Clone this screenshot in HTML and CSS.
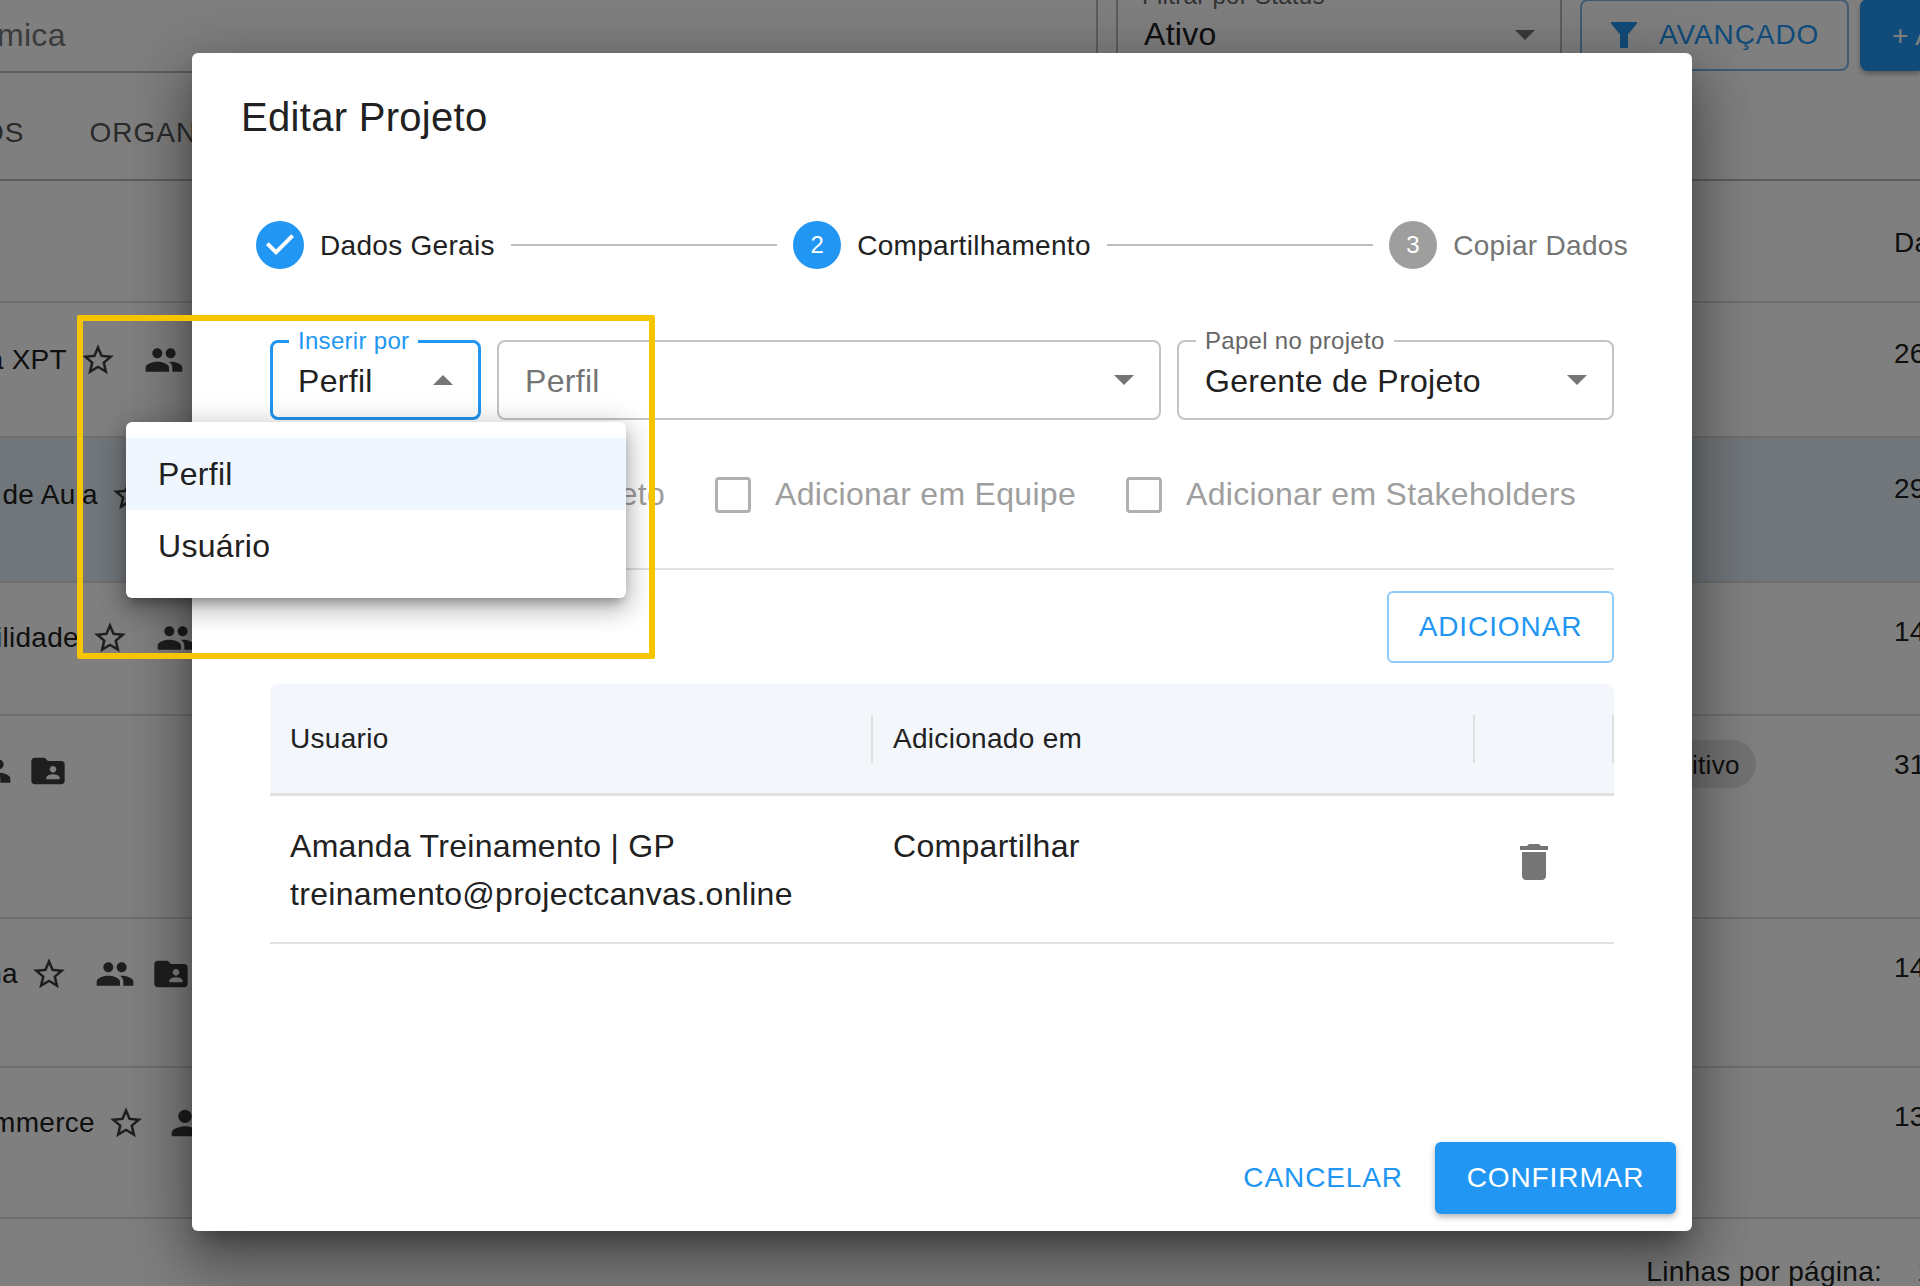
FILE: index.html
```html
<!DOCTYPE html>
<html lang="pt-BR">
<head>
    <meta charset="UTF-8">
    <meta name="viewport" content="width=device-width, initial-scale=1.0">
    <title>Editar Projeto</title>
    <link rel="stylesheet" href="styles.css">
</head>
<body>
    <svg class="sprites" width="0" height="0">
        <symbol id="i-star" viewBox="0 0 24 24"><path d="M22 9.24l-7.19-.62L12 2 9.19 8.63 2 9.24l5.46 4.73L5.82 21 12 17.27 18.18 21l-1.63-7.03L22 9.24zM12 15.4l-3.76 2.27 1-4.28-3.32-2.88 4.38-.38L12 6.1l1.71 4.04 4.38.38-3.32 2.88 1 4.28L12 15.4z"/></symbol>
        <symbol id="i-group" viewBox="0 0 24 24"><path d="M16 11c1.66 0 2.99-1.34 2.99-3S17.66 5 16 5c-1.66 0-3 1.34-3 3s1.34 3 3 3zm-8 0c1.66 0 2.99-1.34 2.99-3S9.66 5 8 5C6.34 5 5 6.34 5 8s1.34 3 3 3zm0 2c-2.33 0-7 1.17-7 3.5V19h14v-2.5c0-2.33-4.67-3.5-7-3.5zm8 0c-.29 0-.62.02-.97.05 1.16.84 1.97 1.97 1.97 3.45V19h6v-2.5c0-2.33-4.67-3.5-7-3.5z"/></symbol>
        <symbol id="i-person" viewBox="0 0 24 24"><path d="M12 12c2.21 0 4-1.79 4-4s-1.79-4-4-4-4 1.79-4 4 1.79 4 4 4zm0 2c-2.67 0-8 1.34-8 4v2h16v-2c0-2.66-5.33-4-8-4z"/></symbol>
        <symbol id="i-folder" viewBox="0 0 24 24"><path d="M20 6h-8l-2-2H4c-1.1 0-1.99.9-1.99 2L2 18c0 1.1.9 2 2 2h16c1.1 0 2-.9 2-2V8c0-1.1-.9-2-2-2zm-5 3c1.1 0 2 .9 2 2s-.9 2-2 2-2-.9-2-2 .9-2 2-2zm4 8h-8v-1c0-1.33 2.67-2 4-2s4 .67 4 2v1z"/></symbol>
    </svg>

    <!-- pagina por tras do dialogo -->
    <div class="page">
        <div class="topbar">
            <div class="search">mica</div>
            <div class="status-select">
                <span class="status-label">Filtrar por Status</span>
                <span>Ativo</span>
                <span class="arrow"></span>
            </div>
            <div class="btn-advanced">
                <svg class="filter-icon" viewBox="0 0 26 26"><path d="M1 0h24c.9 0 1.300 1 .8 1.700L17 12.500V25c0 .6-.4 1-1 1h-6c-.6 0-1-.4-1-1V12.500L.2 1.700C-.3 1 .1 0 1 0z"/></svg>
                AVANÇADO
            </div>
            <div class="btn-new">+ A</div>
        </div>
        <div class="tabs"><span class="tab-os">OS</span><span class="tab-org">ORGANIZAÇÕES</span></div>
        <div class="thead"><span class="col-sep"></span><span class="num">Da</span></div>

        <div class="row row-1">
            <span class="name">a XPT</span>
            <svg class="star"><use href="#i-star"/></svg>
            <svg class="ico ico-first"><use href="#i-group"/></svg>
            <span class="num">26</span>
        </div>
        <div class="row row-2 row-selected">
            <span class="name">de Aula</span>
            <svg class="star"><use href="#i-star"/></svg>
            <span class="num">29</span>
        </div>
        <div class="row row-3">
            <span class="name">ilidade</span>
            <svg class="star"><use href="#i-star"/></svg>
            <svg class="ico ico-first"><use href="#i-group"/></svg>
            <span class="num">14</span>
        </div>
        <div class="row row-4">
            <svg class="ico"><use href="#i-group"/></svg>
            <svg class="ico ico-next"><use href="#i-folder"/></svg>
            <span class="chip">itivo</span>
            <span class="num">31</span>
        </div>
        <div class="row row-5">
            <span class="name">na</span>
            <svg class="star"><use href="#i-star"/></svg>
            <svg class="ico ico-first"><use href="#i-group"/></svg>
            <svg class="ico ico-next"><use href="#i-folder"/></svg>
            <span class="num">14</span>
        </div>
        <div class="row row-6">
            <span class="name">mmerce</span>
            <svg class="star"><use href="#i-star"/></svg>
            <svg class="ico ico-person"><use href="#i-person"/></svg>
            <span class="num">13</span>
        </div>
        <div class="pager"><span>Linhas por página:</span><span>1</span></div>
    </div>
    <div class="scrim"></div>

    <div class="modal">
        <h2 class="modal-title">Editar Projeto</h2>

        <div class="stepper">
            <svg class="step-icon" viewBox="0 0 24 24"><path d="M12 0a12 12 0 1 0 0 24 12 12 0 0 0 0-24zm-2 17l-5-5 1.400-1.400 3.600 3.600 7.600-7.600L19 8l-9 9z"/></svg>
            <span class="step-text">Dados Gerais</span>
            <span class="step-line"></span>
            <span class="step-num">2</span>
            <span class="step-text">Compartilhamento</span>
            <span class="step-line"></span>
            <span class="step-num step-off">3</span>
            <span class="step-text step-text-off">Copiar Dados</span>
        </div>

        <div class="form">
            <div class="fields">
                <div class="field field-by field-focus">
                    <span class="field-label">Inserir por</span>
                    <span class="field-value">Perfil</span>
                    <span class="arrow arrow-up"></span>
                </div>
                <div class="field field-profile">
                    <span class="field-value placeholder">Perfil</span>
                    <span class="arrow"></span>
                </div>
                <div class="field field-role">
                    <span class="field-label field-label-off">Papel no projeto</span>
                    <span class="field-value">Gerente de Projeto</span>
                    <span class="arrow"></span>
                </div>
            </div>

            <div class="checks">
                <label class="check check-first"><span class="box"></span>Adicionar em Projeto</label>
                <label class="check"><span class="box"></span>Adicionar em Equipe</label>
                <label class="check"><span class="box"></span>Adicionar em Stakeholders</label>
            </div>

            <div class="add-row">
                <button class="btn-add">ADICIONAR</button>
            </div>

            <div class="table">
                <div class="table-head">
                    <div class="cell cell-user">Usuario</div>
                    <div class="cell cell-date">Adicionado em</div>
                    <div class="cell cell-act"></div>
                </div>
                <div class="table-row">
                    <div class="cell cell-user">Amanda Treinamento | GP<br>treinamento@projectcanvas.online</div>
                    <div class="cell cell-date">Compartilhar</div>
                    <div class="cell cell-act">
                        <svg class="trash" viewBox="0 0 24 24"><path d="M6 19c0 1.100.9 2 2 2h8c1.100 0 2-.9 2-2V7H6v12zM19 4h-3.500l-1-1h-5l-1 1H5v2h14V4z"/></svg>
                    </div>
                </div>
            </div>
        </div>

        <div class="modal-footer">
            <button class="btn-cancel">CANCELAR</button>
            <button class="btn-confirm">CONFIRMAR</button>
        </div>
    </div>

    <div class="menu">
        <div class="menu-item menu-item-on">Perfil</div>
        <div class="menu-item">Usuário</div>
    </div>

    <div class="highlight"></div>
</body>
</html>
```

FILE: styles.css
```css
* {
    box-sizing: border-box;
}
html, body {
    margin: 0;
    height: 1286px;
    overflow: hidden;
}
body {
    position: relative;
    width: 1920px;
    font-family: "Liberation Sans", Arial, sans-serif;
    font-size: 32px;
    letter-spacing: 0.3px;
    color: #212121;
    background: #fff;
}
.sprites {
    position: absolute;
}

/* pagina de fundo */
.page {
    height: 1286px;
    overflow: hidden;
}
.topbar {
    display: flex;
    align-items: flex-end;
    height: 73px;
}
.search {
    width: 1101px;
    height: 90px;
    flex: none;
    padding: 39px 0 0 0;
    margin-left: -3px;
    line-height: 26px;
    font-size: 32px;
    color: #777;
    border-right: 2px solid #bbb;
    border-bottom: 2px solid #bbb;
}
.status-select {
    position: relative;
    display: flex;
    justify-content: space-between;
    align-items: center;
    flex: none;
    width: 446px;
    height: 100px;
    margin: 0 18px 0 18px;
    padding: 21px 0 0 26px;
    border: 2px solid #bbb;
    border-bottom: none;
    align-self: flex-end;
}
.status-label {
    position: absolute;
    left: 24px;
    top: 7px;
    font-size: 24px;
    color: #666;
}
.status-select .arrow {
    margin-right: 25px;
}
.btn-advanced {
    display: flex;
    align-items: center;
    flex: none;
    width: 269px;
    height: 72px;
    margin-bottom: 2px;
    padding: 0 0 0 29px;
    gap: 22px;
    font-size: 28px;
    letter-spacing: 0.9px;
    white-space: nowrap;
    color: #2196f3;
    border: 2px solid #7fb7ea;
    border-radius: 8px;
}
.filter-icon {
    width: 26px;
    height: 26px;
    fill: #2196f3;
}
.btn-new {
    flex: none;
    width: 60px;
    height: 72px;
    margin: 0 0 2px 11px;
    padding: 21px 0 0 32px;
    font-size: 28px;
    white-space: nowrap;
    overflow: hidden;
    color: #fff;
    background: #2196f3;
    border-radius: 8px 0 0 8px;
    box-shadow: 0 3px 5px rgba(0, 0, 0, 0.3);
}
.tabs {
    height: 108px;
    padding-top: 42px;
    line-height: 36px;
    font-size: 28px;
    letter-spacing: 1px;
    color: #555;
    border-bottom: 2px solid #bbb;
}
.tab-os {
    margin-left: -18px;
}
.tab-org {
    margin-left: 65px;
}
.thead {
    display: flex;
    height: 122px;
    padding-top: 44px;
    border-bottom: 2px solid #ddd;
    align-items: flex-start;
}
.col-sep {
    width: 2px;
    height: 46px;
    margin-left: 1874px;
    background: #ddd;
}
.thead .num {
    margin: 2px 0 0 20px;
    font-size: 28px;
}
.row {
    position: relative;
    display: flex;
    align-items: flex-start;
    padding-top: 35px;
    font-size: 28px;
    line-height: 36px;
    border-bottom: 2px solid #ddd;
}
.row .num {
    position: absolute;
    left: 1894px;
    top: 31px;
    font-size: 28px;
}
.row-selected {
    background: #e2edf5;
}
.row-1 { height: 135px; padding-top: 37px; }
.row-2 { height: 145px; padding-top: 37px; }
.row-3 { height: 133px; }
.row-4 { height: 203px; }
.row-5 { height: 149px; }
.row-6 { height: 151px; }
.row-1 .num,
.row-2 .num {
    top: 33px;
}
.name {
    display: flex;
    justify-content: flex-end;
    flex: none;
    height: 40px;
    align-items: center;
    white-space: nowrap;
}
.row-1 .name { width: 67px; }
.row-2 .name { width: 98px; }
.row-3 .name { width: 79px; }
.row-5 .name { width: 18px; }
.row-6 .name { width: 95px; }
.star {
    flex: none;
    width: 38px;
    height: 38px;
    margin: 1px 0 0 12px;
    fill: #3d3d3d;
}
.ico {
    flex: none;
    width: 40px;
    height: 40px;
    fill: #3d3d3d;
}
.ico-first {
    margin-left: 27px;
}
.ico-next {
    margin-left: 16px;
}
.ico-person {
    margin-left: 20px;
}
.row-4 .ico:first-child {
    margin-left: -28px;
}
.chip {
    position: absolute;
    left: 1600px;
    top: 24px;
    width: 156px;
    height: 48px;
    padding-left: 92px;
    line-height: 50px;
    font-size: 26px;
    background: #e4e4e4;
    border-radius: 24px;
}
.pager {
    display: flex;
    justify-content: flex-end;
    gap: 35px;
    margin-right: -13px;
    padding-top: 36px;
    font-size: 28px;
    line-height: 34px;
}
.scrim {
    position: absolute;
    inset: 0;
    background: rgba(0, 0, 0, 0.5);
}

/* dialogo */
.modal {
    position: absolute;
    left: 192px;
    top: 53px;
    display: flex;
    flex-direction: column;
    width: 1500px;
    height: 1178px;
    background: #fff;
    border-radius: 6px;
    box-shadow: 0 15px 21px -10px rgba(0, 0, 0, 0.34), 0 34px 53px 4px rgba(0, 0, 0, 0.24), 0 13px 64px 11px rgba(0, 0, 0, 0.2);
}
.modal-title {
    margin: 38px 0 0 49px;
    font-size: 40px;
    font-weight: 400;
    line-height: 52px;
    letter-spacing: 0.3px;
}
.stepper {
    display: flex;
    align-items: center;
    margin-top: 78px;
    padding: 0 64px 0 64px;
    height: 48px;
    font-size: 28px;
}
.step-icon {
    flex: none;
    width: 48px;
    height: 48px;
    fill: #2196f3;
}
.step-num {
    display: flex;
    justify-content: center;
    align-items: center;
    flex: none;
    width: 48px;
    height: 48px;
    font-size: 24px;
    color: #fff;
    background: #2196f3;
    border-radius: 50%;
}
.step-off {
    background: #9e9e9e;
}
.step-text {
    flex: none;
    margin-left: 16px;
    padding-top: 1px;
}
.step-text-off {
    color: #757575;
}
.step-line {
    flex: 1;
    height: 2px;
    margin: 0 16px;
    background: #bdbdbd;
}
.form {
    padding: 0 78px 0 78px;
}
.fields {
    display: flex;
    gap: 16px;
    margin-top: 71px;
}
.field {
    position: relative;
    display: flex;
    justify-content: space-between;
    align-items: center;
    flex: none;
    height: 80px;
    padding: 0 25px 0 26px;
    border: 2px solid #c4c4c4;
    border-radius: 8px;
}
.field-value {
    padding-top: 2px;
}
.field-by {
    width: 211px;
}
.field-profile {
    flex: 1;
}
.field-role {
    width: 437px;
}
.field-focus {
    border: 3px solid #2196f3;
    padding: 0 25px 0 25px;
}
.field-label {
    position: absolute;
    left: 16px;
    top: -16px;
    padding: 0 9px;
    font-size: 24px;
    line-height: 28px;
    color: #2196f3;
    background: #fff;
}
.field-label-off {
    left: 17px;
    top: -15px;
    color: #666;
}
.placeholder {
    color: #757575;
}
.arrow {
    flex: none;
    width: 0;
    height: 0;
    border-left: 10px solid transparent;
    border-right: 10px solid transparent;
    border-top: 10px solid #757575;
}
.arrow-up {
    border-top: none;
    border-bottom: 10px solid #757575;
}
.checks {
    display: flex;
    align-items: center;
    gap: 50px;
    height: 150px;
    padding-top: 1px;
    border-bottom: 2px solid #e0e0e0;
    color: #9e9e9e;
}
.check {
    display: flex;
    align-items: center;
    gap: 24px;
}
.check-first {
    margin-left: 32px;
}
.box {
    width: 36px;
    height: 36px;
    border: 3px solid #b0b0b0;
    border-radius: 4px;
}
.add-row {
    display: flex;
    justify-content: flex-end;
    margin-top: 21px;
}
.btn-add {
    width: 227px;
    height: 72px;
    font-family: inherit;
    font-size: 28px;
    letter-spacing: 0.9px;
    color: #2196f3;
    background: #fff;
    border: 2px solid #90caf9;
    border-radius: 6px;
}
.table {
    margin-top: 21px;
}
.table-head {
    display: flex;
    align-items: center;
    height: 112px;
    font-size: 28px;
    background: #f3f6fb;
    border-bottom: 3px solid #e0e0e0;
    border-radius: 8px 8px 0 0;
}
.cell {
    padding-left: 20px;
}
.cell-user {
    width: 601px;
}
.cell-date {
    width: 602px;
}
.cell-act {
    flex: 1;
}
.table-head .cell-date,
.table-head .cell-act {
    height: 48px;
    line-height: 48px;
    border-left: 2px solid #e0e0e0;
}
.table-head .cell-act {
    border-right: 2px solid #e0e0e0;
}
.table-row {
    display: flex;
    height: 148px;
    padding-top: 26px;
    line-height: 48px;
    border-bottom: 2px solid #e0e0e0;
}
.table-row .cell-date {
    padding-left: 22px;
}
.trash {
    display: block;
    width: 48px;
    height: 48px;
    margin: 16px 0 0 17px;
    fill: #757575;
}
.modal-footer {
    display: flex;
    justify-content: flex-end;
    align-items: center;
    gap: 32px;
    margin-top: auto;
    padding: 0 16px 17px 0;
}
.btn-cancel,
.btn-confirm {
    height: 72px;
    font-family: inherit;
    font-size: 28px;
    letter-spacing: 0.9px;
    border: none;
    border-radius: 6px;
}
.btn-cancel {
    padding: 0;
    color: #2196f3;
    background: none;
}
.btn-confirm {
    width: 241px;
    color: #fff;
    background: #2196f3;
    box-shadow: 0 3px 6px rgba(0, 0, 0, 0.3);
}

/* menu aberto e destaque amarelo */
.menu {
    position: absolute;
    left: 126px;
    top: 422px;
    width: 500px;
    height: 176px;
    padding: 16px 0;
    background: #fff;
    border-radius: 6px;
    box-shadow: 0 7px 11px -4px rgba(0, 0, 0, 0.3), 0 11px 24px 2px rgba(0, 0, 0, 0.18), 0 4px 30px 4px rgba(0, 0, 0, 0.14);
}
.menu-item {
    height: 72px;
    padding-left: 32px;
    line-height: 72px;
}
.menu-item-on {
    background: #eff6fd;
}
.highlight {
    position: absolute;
    left: 77px;
    top: 315px;
    width: 578px;
    height: 344px;
    border: 6px solid #f5c500;
    border-radius: 2px;
}
```
